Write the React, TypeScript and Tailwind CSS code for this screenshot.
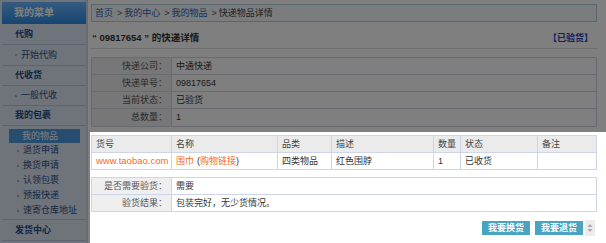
import React from "react";

const subItems = ["退货申请", "换货申请", "认领包裹", "预报快递", "速寄仓库地址"];

function SubItem({ label }: { label: string }) {
  return (
    <div className="h-[15px] flex items-center pl-[15px] text-[#2a4f86]">
      <span className="w-[2px] h-[2px] bg-[#9fb3c8] mr-[4px]" />
      <span>{label}</span>
    </div>
  );
}

function Sidebar() {
  return (
    <div className="w-[88px] shrink-0 h-full bg-[#dde8f4] border-r-2 border-[#c9d6e3] pt-[2px] pl-[2px] flex flex-col">
      <div className="h-[22px] bg-linear-to-b from-[#6ab8ff] to-[#2f88e0] text-white font-bold flex items-center pl-[12px] text-[10px]">
        我的菜单
      </div>
      <div className="h-[21px] border-b border-[#b9c9da] flex items-center pl-[13px] font-bold text-[#1e4a8a]">代购</div>
      <div className="h-[21px] border-b border-[#b9c9da] flex items-center pl-[13px] text-[#2a4f86]">
        <span className="w-[2px] h-[2px] bg-[#9fb3c8] mr-[4px]" />
        开始代购
      </div>
      <div className="h-[20px] border-b border-[#b9c9da] flex items-center pl-[13px] font-bold text-[#1e4a8a]">代收货</div>
      <div className="h-[20px] border-b border-[#b9c9da] flex items-center pl-[13px] text-[#2a4f86]">
        <span className="w-[2px] h-[2px] bg-[#9fb3c8] mr-[4px]" />
        一般代收
      </div>
      <div className="h-[20px] border-b border-[#b9c9da] flex items-center pl-[13px] font-bold text-[#1e4a8a]">我的包裹</div>
      <div className="h-[94px] border-b border-[#b9c9da] pt-[3px] flex flex-col">
        <div className="ml-[7px] w-[71px] h-[14px] bg-[#4d98dc] text-white flex items-center pl-[13px]">我的物品</div>
        {subItems.map((s) => (
          <SubItem key={s} label={s} />
        ))}
      </div>
      <div className="h-[21px] border-b border-[#b9c9da] flex items-center pl-[13px] font-bold text-[#1e4a8a]">发货中心</div>
    </div>
  );
}

function InfoRow({ label, value, last }: { label: string; value: string; last?: boolean }) {
  return (
    <div className={"flex h-[17px] " + (last ? "" : "border-b border-[#d3d7e3]")}>
      <div className="w-[80px] shrink-0 bg-[#efefef] border-r border-[#d3d7e3] flex items-center justify-end pr-[4px] text-[#555]">
        {label}
      </div>
      <div className="flex-1 flex items-center pl-[4px] text-[#333]">{value}</div>
    </div>
  );
}

function Spinner() {
  return (
    <div className="w-[10px] h-[16px] bg-[#ececec] flex items-center justify-center mr-[2px]">
      <svg width="6" height="10" viewBox="0 0 6 10">
        <path d="M3 1 L5.5 4 L0.5 4 Z" fill="#a8a8a8" />
        <path d="M3 9 L5.5 6 L0.5 6 Z" fill="#a8a8a8" />
      </svg>
    </div>
  );
}

function Main() {
  const cols = "grid grid-cols-[80px_106px_54px_102px_27px_77px_1fr]";
  const cell = "border-r border-[#cdd6e8] flex items-center pl-[4px]";
  return (
    <div className="flex-1 pl-[3px] pr-[9px] pt-[4px] flex flex-col">
      <div className="h-[18px] border border-[#b7cfdc] bg-[#f5f9fb] flex items-center pl-[3px] text-[#333]">
        <span className="text-[#2e62b8]">首页</span>
        <span className="text-[#555] ml-[4px] mr-[2px]">&gt;</span>
        <span className="text-[#2e62b8]">我的中心</span>
        <span className="text-[#555] ml-[4px] mr-[2px]">&gt;</span>
        <span className="text-[#2e62b8]">我的物品</span>
        <span className="text-[#555] ml-[4px] mr-[2px]">&gt;</span>
        <span className="text-[#444]">快递物品详情</span>
      </div>
      <div className="mt-[8px] h-[16px] flex items-center justify-between pl-[1px] pr-[4px]">
        <span className="font-bold text-[#333] text-[9.5px]">“ 09817654 ” 的快递详情</span>
        <span className="font-bold text-[#2a3cc0]">【已验货】</span>
      </div>
      <div className="mt-[2px] border-b border-[#dcdcdc]" />
      <div className="mt-[8px] border border-[#d3d7e3]">
        <InfoRow label="快递公司：" value="中通快递" />
        <InfoRow label="快递单号：" value="09817654" />
        <InfoRow label="当前状态：" value="已验货" />
        <InfoRow label="总数量：" value="1" last />
      </div>
      <div className="mt-[8px] border border-[#cdd6e8]">
        <div className={cols + " h-[17px] bg-[#ebebeb] border-b border-[#cdd6e8] text-[#444]"}>
          <div className={cell}>货号</div>
          <div className={cell}>名称</div>
          <div className={cell}>品类</div>
          <div className={cell}>描述</div>
          <div className={cell}>数量</div>
          <div className={cell}>状态</div>
          <div className="flex items-center pl-[4px]">备注</div>
        </div>
        <div className={cols + " h-[16px] bg-white text-[#333]"}>
          <div className={cell + " text-[#f26b1d] text-[9.5px]"}>www.taobao.com</div>
          <div className={cell}>
            <span className="text-[#f26b1d]">围巾</span>
            <span className="ml-[3px]">(</span>
            <span className="text-[#f26b1d]">购物链接</span>
            <span>)</span>
          </div>
          <div className={cell}>四类物品</div>
          <div className={cell}>红色围脖</div>
          <div className={cell}>1</div>
          <div className={cell}>已收货</div>
          <div />
        </div>
      </div>
      <div className="mt-[7px] border border-[#cdd6e8]">
        <div className="flex h-[17px] border-b border-[#cdd6e8]">
          <div className="w-[80px] shrink-0 bg-[#efefef] border-r border-[#cdd6e8] flex items-center justify-end pr-[4px] text-[#555]">
            是否需要验货：
          </div>
          <div className="flex-1 flex items-center pl-[4px] text-[#333]">需要</div>
        </div>
        <div className="flex h-[16px]">
          <div className="w-[80px] shrink-0 bg-[#efefef] border-r border-[#cdd6e8] flex items-center justify-end pr-[4px] text-[#555]">
            验货结果：
          </div>
          <div className="flex-1 flex items-center pl-[4px] text-[#333]">包装完好，无少货情况。</div>
        </div>
      </div>
      <div className="mt-[8px] flex items-start justify-end">
        <button className="w-[48px] h-[14px] bg-[#48a4c1] text-white font-bold flex items-center justify-center mt-[1px]">
          我要换货
        </button>
        <button className="w-[48px] h-[14px] bg-[#48a4c1] text-white font-bold flex items-center justify-center ml-[5px] mt-[1px]">
          我要退货
        </button>
        <div className="ml-[2px]">
          <Spinner />
        </div>
      </div>
    </div>
  );
}

export default function App() {
  return (
    <div className="relative w-[606px] h-[243px] overflow-hidden bg-white flex font-['Liberation_Sans','Noto_Sans_CJK_SC',sans-serif] text-[9px] leading-none">
      <Sidebar />
      <Main />
      <div className="absolute left-0 top-0 w-[606px] h-[132px] bg-black/50" />
      <div className="absolute left-0 top-[132px] w-[90px] h-[111px] bg-black/50" />
    </div>
  );
}
